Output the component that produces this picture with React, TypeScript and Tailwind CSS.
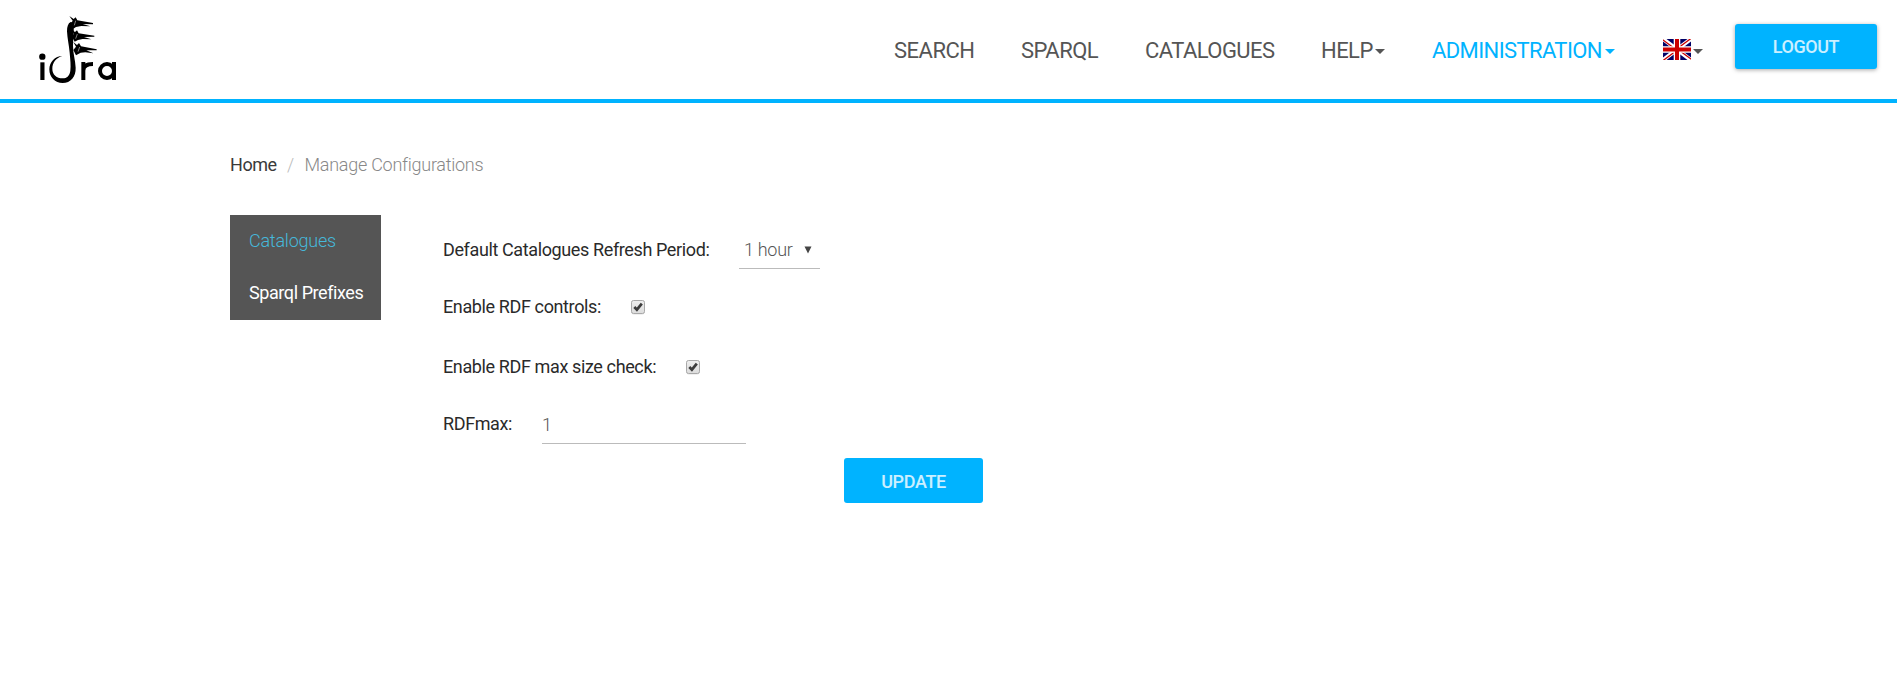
import type { ReactNode } from "react";

function Logo() {
  return (
    <svg width="120" height="99" viewBox="0 0 360 297" aria-label="idra">
      <g fill="#000">
        <circle cx="67" cy="170" r="9.5" />
        <rect x="61" y="187" width="12.5" height="53" />
        <path d="M127 168 C105 168 88 186 88 208 C88 232 105 249 128 249 C152 249 168 230 167 203 C166 180 159 160 159 138 C159 116 163 98 161 84 L163 68 L152 66 C144 70 141 80 141 94 C142 116 147 134 149 158 C151 180 153 196 151 212 C149 227 141 235 128 235 C110 235 97 224 97 206 C97 188 108 174 127 168 Z" />
        <path d="M148 48 L161 57 L167 52 L172 61 L219 69 L219 73 L188 72 L211 79 L184 78 L168 81 L160 86 L152 72 L158 62 Z" />
        <path d="M152 87 L165 96 L171 91 L176 100 L223 107 L223 110 L192 111 L214 118 L188 117 L174 120 L164 125 L156 110 L162 101 Z" />
        <path d="M160 126 L171 135 L177 129 L183 139 L230 148 L230 151 L199 151 L220 160 L196 157 L182 158 L168 166 L160 150 L168 140 Z" />
      </g>
      <g fill="none" stroke="#fff" strokeWidth="1.5">
        <path d="M167 62 L163 76 M172 102 L167 116 M179 141 L174 155" />
      </g>
      <g fill="none" stroke="#000" strokeWidth="12">
        <path d="M190 240 V186 M190 212 C190 199 200 192 219 192" />
        <circle cx="261" cy="213" r="21" />
        <path d="M282 186 V240" />
      </g>
    </svg>
  );
}

function Flag() {
  return (
    <svg width="28" height="21" viewBox="0 0 28 21">
      <rect width="28" height="21" fill="#006" />
      <path d="M0 0 L28 21 M28 0 L0 21" stroke="#fff" strokeWidth="4.2" />
      <path d="M-.4 .7 L14 11.3 M28.4 20.3 L14 9.7 M28 -.5 L14 9.8 M0 21.5 L14 11.2" stroke="#c00" strokeWidth="1.4" />
      <path d="M14 0 V21 M0 10.5 H28" stroke="#fff" strokeWidth="6.6" />
      <path d="M14 0 V21 M0 10.5 H28" stroke="#c00" strokeWidth="4" />
    </svg>
  );
}

function Caret({ className = "" }: { className?: string }) {
  return (
    <svg width="10" height="5" viewBox="0 0 10 5" className={className} fill="currentColor">
      <path d="M0 0 H10 L5 5 Z" />
    </svg>
  );
}

function Check() {
  return (
    <svg width="15" height="16" viewBox="0 0 15 16" role="checkbox" aria-checked="true">
      <defs>
        <linearGradient id="box" x1="0" y1="0" x2="0" y2="1">
          <stop offset="0" stopColor="#eee" />
          <stop offset="1" stopColor="#dcdcdc" />
        </linearGradient>
      </defs>
      <rect x="1.5" y="2" width="13" height="13" rx="2" fill="none" stroke="#000" strokeOpacity=".12" />
      <rect x="1.5" y="1.5" width="13" height="13" rx="2" fill="url(#box)" stroke="#a9a9a9" />
      <path d="M4.3 8 L6.9 10.7 L11.8 4.6" fill="none" stroke="#3c3c3c" strokeWidth="2.7" />
    </svg>
  );
}

function Label({ children }: { children: ReactNode }) {
  return <span className="whitespace-nowrap tracking-[-0.38px] text-[#2a2a2a]">{children}</span>;
}

export default function App() {
  return (
    <div className="min-h-[675px] bg-white font-['Roboto',sans-serif] text-[18px] leading-[26px] text-[#555]">
      <header className="flex h-[103px] justify-between border-b-4 border-[#00b3ff] pl-5 pr-5">
        <Logo />
        <nav className="flex h-[99px] items-center whitespace-nowrap text-[22px] tracking-[-0.55px]">
          <a className="w-[127px] pt-[2px] tracking-[-0.5px]">SEARCH</a>
          <a className="w-[124px] pt-[2px]">SPARQL</a>
          <a className="w-[176px] pt-[2px]">CATALOGUES</a>
          <a className="flex w-[111px] items-center gap-[2px] pt-[2px]">
            HELP
            <Caret className="mt-px" />
          </a>
          <a className="flex w-[231px] items-center gap-[3px] pt-[2px] tracking-[-0.6px] text-[#00b3ff]">
            ADMINISTRATION
            <Caret className="mt-px" />
          </a>
          <a className="flex w-[72px] items-center gap-[2px]">
            <Flag />
            <Caret className="mt-[3px]" />
          </a>
          <button className="mb-[6px] h-[45px] w-[142px] rounded-[3px] bg-[#00b3ff] pt-px text-[18px] font-medium tracking-[-0.45px] text-white/80 shadow-[0_1px_4px_rgba(0,0,0,0.35)]">
            LOGOUT
          </button>
        </nav>
      </header>

      <main className="pl-[230px]">
        <div className="flex h-[112px] pt-[49px]">
          <a className="w-[57px] tracking-[-0.45px] text-[#3a3a3a]">Home</a>
          <span className="w-[17.5px] font-light text-[#bbb]">/</span>
          <span className="font-light tracking-[-0.26px] text-[#888]">Manage Configurations</span>
        </div>
        <div className="flex">
          <aside className="flex h-[105px] w-[151px] flex-col bg-[#555] pl-[19px]">
            <a className="flex h-[52px] items-center font-light tracking-[-0.24px] text-[#46b8da]">Catalogues</a>
            <a className="flex h-[52px] items-center tracking-[-0.42px] text-white">Sparql Prefixes</a>
          </aside>
          <form className="ml-[62px] flex flex-col">
            <div className="flex h-[54px] items-end">
              <div className="flex h-[38px] w-[296px] items-start pt-[6px]">
                <Label>Default Catalogues Refresh Period:</Label>
              </div>
              <div className="flex h-[38px] w-[81px] items-start justify-between border-b border-[#bbb] pl-[5px] pr-[8px] pt-[6px]">
                <span className="font-light tracking-[-0.3px]">1 hour</span>
                <svg width="8" height="8" viewBox="0 0 8 8" className="mt-[9px]" fill="#444">
                  <path d="M.5 .5 H7.5 L4 7.5 Z" />
                </svg>
              </div>
            </div>
            <div className="flex h-[60px] items-center gap-[29px] pt-[16px]">
              <Label>Enable RDF controls:</Label>
              <Check />
            </div>
            <div className="flex h-[60px] items-center gap-[29px] pt-[16px]">
              <Label>Enable RDF max size check:</Label>
              <Check />
            </div>
            <div className="flex h-[55px] items-end">
              <div className="h-[33px] w-[99px]">
                <Label>RDFmax:</Label>
              </div>
              <div className="h-[33px] w-[204px] border-b border-[#bbb] pt-px font-light">1</div>
            </div>
            <button
              type="button"
              className="ml-[401px] mt-[14px] h-[45px] w-[139px] rounded-[3px] bg-[#00b3ff] pt-[2px] font-medium tracking-[-0.35px] text-white/80"
            >
              UPDATE
            </button>
          </form>
        </div>
      </main>
    </div>
  );
}
